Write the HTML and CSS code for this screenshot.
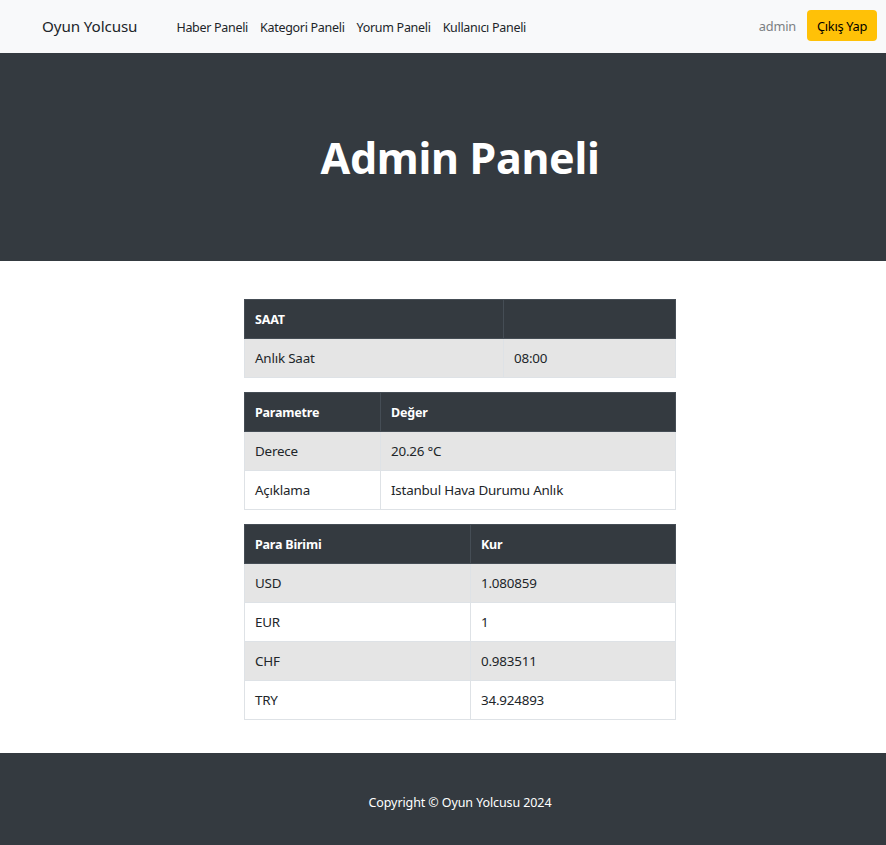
FILE: index.html
```html
<!DOCTYPE html>
<html lang="tr">
<head>
<meta charset="utf-8">
<title>Admin Paneli</title>
<link rel="stylesheet" href="styles.css">
</head>
<body>
<nav class="navbar">
  <a class="brand" href="#">Oyun Yolcusu</a>
  <ul class="nav-links">
    <li><a href="#">Haber Paneli</a></li>
    <li><a href="#">Kategori Paneli</a></li>
    <li><a href="#">Yorum Paneli</a></li>
    <li><a href="#">Kullanıcı Paneli</a></li>
  </ul>
  <div class="nav-right">
    <span class="user">admin</span>
    <a class="btn-warning" href="#">Çıkış Yap</a>
  </div>
</nav>
<header class="hero">
  <h1>Admin Paneli</h1>
</header>
<main class="content">
  <table class="tbl t-saat">
    <thead><tr><th>SAAT</th><th></th></tr></thead>
    <tbody>
      <tr class="odd"><td>Anlık Saat</td><td>08:00</td></tr>
    </tbody>
  </table>
  <table class="tbl t-hava">
    <thead><tr><th>Parametre</th><th>Değer</th></tr></thead>
    <tbody>
      <tr class="odd"><td>Derece</td><td>20.26 °C</td></tr>
      <tr><td>Açıklama</td><td>Istanbul Hava Durumu Anlık</td></tr>
    </tbody>
  </table>
  <table class="tbl t-kur">
    <thead><tr><th>Para Birimi</th><th>Kur</th></tr></thead>
    <tbody>
      <tr class="odd"><td>USD</td><td>1.080859</td></tr>
      <tr><td>EUR</td><td>1</td></tr>
      <tr class="odd"><td>CHF</td><td>0.983511</td></tr>
      <tr><td>TRY</td><td>34.924893</td></tr>
    </tbody>
  </table>
</main>
<footer class="footer">
  <p>Copyright © Oyun Yolcusu 2024</p>
</footer>
</body>
</html>
```

FILE: styles.css
```css
* { box-sizing: border-box; }
body {
  margin: 0;
  font-family: "Noto Sans", "Open Sans", sans-serif;
  color: #212529;
  background: #fff;
}
a { text-decoration: none; }

.navbar {
  height: 53px;
  background: #f8f9fa;
  display: flex;
  align-items: center;
  padding: 0 9px 2px 42px;
}
.brand {
  font-size: 15.2px;
  color: #212529;
  margin-right: 39px;
  letter-spacing: -0.1px;
}
.nav-links {
  list-style: none;
  margin: 0;
  padding: 0;
  display: flex;
  gap: 12px;
  flex: 1;
}
.nav-links a {
  font-size: 12.5px;
  color: #212529;
  letter-spacing: -0.3px;
}
.nav-right {
  display: flex;
  align-items: center;
  gap: 11px;
}
.user {
  color: #7b7f83;
  font-size: 12.8px;
  letter-spacing: -0.2px;
}
.btn-warning {
  background: #ffc107;
  color: #000;
  font-size: 12.8px;
  height: 31px;
  padding: 0 10px;
  border-radius: 4px;
  display: flex;
  align-items: center;
  letter-spacing: -0.3px;
}

.hero {
  background: #343a40;
  height: 208px;
  padding-left: 34px;
  display: flex;
  align-items: center;
  justify-content: center;
}
.hero h1 {
  margin: 0;
  color: #fff;
  font-size: 43px;
  font-weight: 700;
  letter-spacing: -0.3px;
}

.content {
  padding: 38px 0 33px 34px;
  display: flex;
  flex-direction: column;
  align-items: center;
  gap: 14px;
}
.tbl {
  width: 432px;
  border-collapse: collapse;
  font-size: 13.4px;
}
.tbl th, .tbl td {
  height: 39px;
  padding: 0 10px;
  text-align: left;
  border: 1px solid #dee2e6;
  letter-spacing: -0.2px;
}
.tbl th {
  background: #343a40;
  color: #fff;
  font-weight: 700;
  font-size: 12.5px;
  border-color: #454d55;
}
.tbl td { background: #fff; }
.tbl tr.odd td { background: #e5e5e5; }
.t-saat th:first-child { width: 259px; }
.t-hava th:first-child { width: 136px; }
.t-kur th:first-child { width: 226px; }

.footer {
  background: #343a40;
  height: 92px;
  padding: 6px 0 0 34px;
  display: flex;
  align-items: center;
  justify-content: center;
}
.footer p {
  margin: 0;
  color: #fff;
  font-size: 12.5px;
  letter-spacing: -0.1px;
}
```
